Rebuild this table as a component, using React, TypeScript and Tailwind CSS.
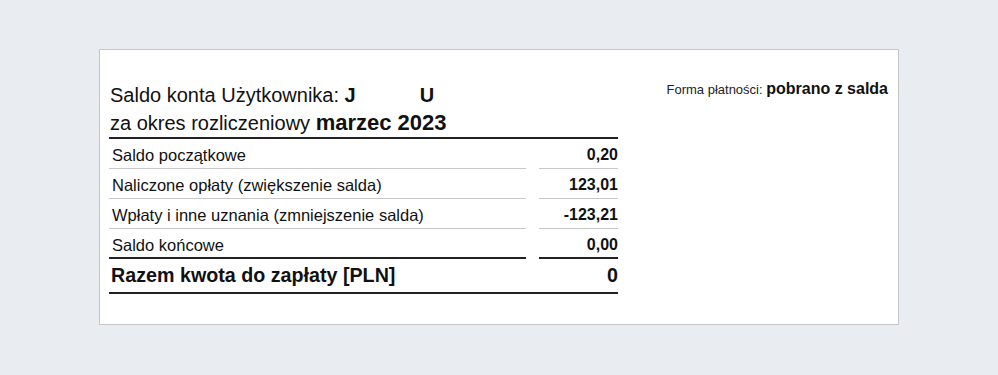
import React from 'react';

const ROWS = [
  { label: 'Saldo początkowe', value: '0,20' },
  { label: 'Naliczone opłaty (zwiększenie salda)', value: '123,01' },
  { label: 'Wpłaty i inne uznania (zmniejszenie salda)', value: '-123,21' },
  { label: 'Saldo końcowe', value: '0,00' },
];

const App = () => {
  return (
    <div
      className="min-h-[375px] w-full bg-[#e9edf1] pt-[49px]"
      style={{ fontFamily: '"Liberation Sans", Arial, sans-serif' }}
    >
      <div className="ml-[99px] flex h-[276px] w-[800px] justify-between border border-[#c6c6c6] bg-white pl-[9px] pr-[10px] pt-[31px] text-[#111]">
        {/* Account summary */}
        <div className="w-[509px]">
          <div className="pl-px text-[20px] leading-[28px]">
            Saldo konta Użytkownika: <span className="font-bold">J</span>
            <span className="inline-block w-[64px]" />
            <span className="font-bold">U</span>
          </div>
          <div className="pl-px text-[20px] leading-[28px]">
            za okres rozliczeniowy <span className="text-[22px] font-bold">marzec 2023</span>
          </div>

          <div className="border-t-2 border-[#222]">
            {ROWS.map((row, i) => {
              const last = i === ROWS.length - 1;
              const line = last ? 'border-b-2 border-[#222]' : 'border-b border-[#c8c8c8]';
              return (
                <div key={row.label} className="grid grid-cols-[417px_79px] gap-x-[13px]">
                  <div className={`h-[30px] pl-[3px] pt-[2px] text-[16.5px] leading-[28px] ${line}`}>
                    {row.label}
                  </div>
                  <div className={`h-[30px] pt-[2px] text-right text-[16px] font-bold leading-[28px] ${line}`}>
                    {row.value}
                  </div>
                </div>
              );
            })}
            <div className="flex h-[35px] items-center justify-between border-b-2 border-[#222] pl-[2px] text-[19.7px] font-bold">
              <span>Razem kwota do zapłaty [PLN]</span>
              <span>0</span>
            </div>
          </div>
        </div>

        {/* Payment method */}
        <div className="text-right leading-[16px]">
          <span className="text-[13px] text-[#222]">Forma płatności: </span>
          <span className="text-[16px] font-bold">pobrano z salda</span>
        </div>
      </div>
    </div>
  );
};

export default App;
